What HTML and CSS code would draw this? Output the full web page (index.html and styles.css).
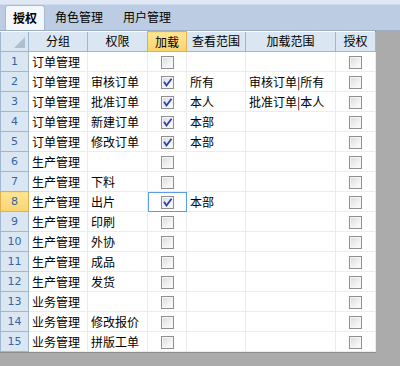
FILE: index.html
```html
<!DOCTYPE html>
<html>
<head>
<meta charset="utf-8">
<link rel="stylesheet" href="styles.css">
</head>
<body>
<div class="app">
  <div class="tabbar">
    <div class="tab active">授权</div>
    <div class="tab">角色管理</div>
    <div class="tab">用户管理</div>
  </div>
  <div class="gridwrap">
    <table class="grid">
      <colgroup>
        <col class="c-rh"><col class="c-grp"><col class="c-perm"><col class="c-load"><col class="c-view"><col class="c-range"><col class="c-auth">
      </colgroup>
      <thead>
        <tr>
          <th class="corner"><span class="tri"></span></th>
          <th>分组</th>
          <th>权限</th>
          <th class="hot">加载</th>
          <th>查看范围</th>
          <th>加载范围</th>
          <th>授权</th>
        </tr>
      </thead>
      <tbody id="rows"></tbody>
    </table>
  </div>
</div>
<script>
const data = [
  ["订单管理","",0,"",""],
  ["订单管理","审核订单",1,"所有","审核订单|所有"],
  ["订单管理","批准订单",1,"本人","批准订单|本人"],
  ["订单管理","新建订单",1,"本部",""],
  ["订单管理","修改订单",1,"本部",""],
  ["生产管理","",0,"",""],
  ["生产管理","下料",0,"",""],
  ["生产管理","出片",1,"本部",""],
  ["生产管理","印刷",0,"",""],
  ["生产管理","外协",0,"",""],
  ["生产管理","成品",0,"",""],
  ["生产管理","发货",0,"",""],
  ["业务管理","",0,"",""],
  ["业务管理","修改报价",0,"",""],
  ["业务管理","拼版工单",0,"",""]
];
const check = '<svg class="ck" viewBox="0 0 13 13" width="13" height="13"><path d="M3.5 6.5 L5.5 9.5 L10 3.5" fill="none" stroke="#2d3fb2" stroke-width="1.8" stroke-linecap="square"/></svg>';
const box = c => '<span class="cb">' + (c ? check : '') + '</span>';
let html = '';
data.forEach((r, i) => {
  const sel = i === 7;
  html += '<tr>' +
    '<td class="rh' + (sel ? ' hot' : '') + '">' + (i + 1) + '</td>' +
    '<td class="txt">' + r[0] + '</td>' +
    '<td class="txt">' + r[1] + '</td>' +
    '<td class="chk' + (sel ? ' cur' : '') + '">' + box(r[2]) + '</td>' +
    '<td class="txt">' + r[3] + '</td>' +
    '<td class="txt">' + r[4] + '</td>' +
    '<td class="chk">' + box(0) + '</td>' +
    '</tr>';
});
document.getElementById('rows').innerHTML = html;
</script>
</body>
</html>
```
FILE: styles.css
```css
* { box-sizing: border-box; }
html, body { margin: 0; padding: 0; }
body {
  font-family: "Noto Sans CJK SC", "Noto Sans", sans-serif;
  font-size: 12px;
  color: #000;
}
.app {
  width: 400px;
  height: 366px;
  background: #ababab;
  display: flex;
  flex-direction: column;
  overflow: hidden;
}
.tabbar {
  height: 31px;
  flex: none;
  background: linear-gradient(#dfe8f4 0, #dfe8f4 4px, #bccde3 5px, #bccde3 100%);
  border-bottom: 1px solid #9aaec8;
  display: flex;
  align-items: flex-end;
  padding-left: 5px;
}
.tab {
  height: 25px;
  line-height: 24px;
  padding: 0 10px;
  white-space: nowrap;
}
.tab.active {
  background: #f4f7fb;
  border: 1px solid #a8bbd3;
  border-bottom: none;
  border-radius: 3px 3px 0 0;
  font-weight: bold;
  padding: 0 7px;
  margin-right: 0;
}
.gridwrap {
  width: 376px;
  background: #fff;
  border-right: 1px solid #8c8c8c;
  border-bottom: 1px solid #8c8c8c;
  flex: none;
}
.grid {
  border-collapse: collapse;
  table-layout: fixed;
  width: 375px;
}
.c-rh { width: 28px; }
.c-grp { width: 59px; }
.c-perm { width: 60px; }
.c-load { width: 39px; }
.c-view { width: 59px; }
.c-range { width: 90px; }
.c-auth { width: 40px; }
th, td {
  height: 20px;
  padding: 0;
  white-space: nowrap;
  overflow: hidden;
  line-height: 18px;
}
th {
  background: #dbe6f3;
  border: 1px solid #9fb6cf;
  border-top: none;
  font-weight: normal;
  text-align: center;
}
th.hot {
  background: linear-gradient(#fde696, #f9d46e);
  border: 1px solid #e2b050;
}
th.corner {
  position: relative;
}
.tri {
  position: absolute;
  right: 3px;
  bottom: 3px;
  width: 0;
  height: 0;
  border-left: 11px solid transparent;
  border-bottom: 11px solid #aebfd3;
}
td {
  border: 1px solid #ececec;
}
td.rh {
  background: #dbe6f3;
  border: 1px solid #9fb6cf;
  color: #3566a3;
  text-align: center;
  font-family: "DejaVu Sans", sans-serif;
  font-size: 11px;
}
td.rh.hot {
  background: linear-gradient(#fde696, #f9d46e);
  border: 1px solid #e2b050;
}
td.txt {
  padding-left: 3px;
}
td.chk {
  text-align: center;
}
td.cur {
  outline: 1px solid #5b9de6;
  outline-offset: -1px;
}
.cb {
  display: inline-block;
  width: 13px;
  height: 13px;
  vertical-align: middle;
  border: 1px solid #8f8f8f;
  background: linear-gradient(135deg, #d6d9dd 0%, #eef0f2 55%, #fdfdfd 100%);
  box-shadow: inset 0 0 0 1px #f6f6f6;
  position: relative;
  margin-top: -2px;
}
.ck {
  position: absolute;
  left: -1px;
  top: -1px;
}
```
